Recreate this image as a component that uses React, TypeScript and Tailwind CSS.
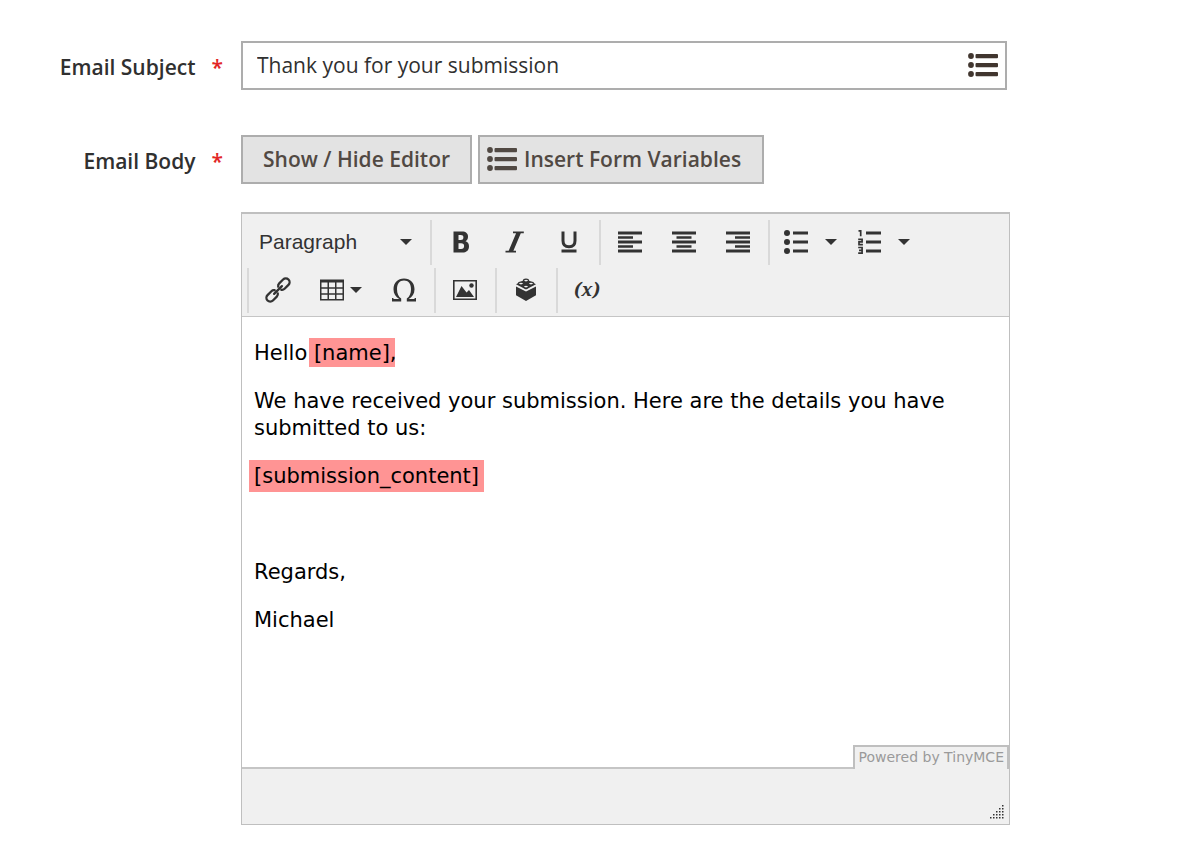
import type { ReactNode } from 'react';

function ListIcon() {
  return (
    <svg width="30" height="24" viewBox="0 0 30 24" fill="currentColor" className="shrink-0" aria-hidden="true">
      {[3, 12, 21].map((y) => (
        <g key={y}>
          <circle cx="3" cy={y} r="2.9" />
          <rect x="7.5" y={y - 2} width="22.5" height="4.2" rx="1" />
        </g>
      ))}
    </svg>
  );
}

function Icon({ children }: { children: ReactNode }) {
  return (
    <svg
      width="24"
      height="24"
      viewBox="0 0 24 24"
      fill="currentColor"
      className="shrink-0 overflow-visible"
      aria-hidden="true"
    >
      {children}
    </svg>
  );
}

function Caret() {
  return (
    <svg width="12" height="6" viewBox="0 0 12 6" fill="currentColor" className="shrink-0" aria-hidden="true">
      <path d="M0 0h12L6 6z" />
    </svg>
  );
}

function Group({ children, first = false }: { children: ReactNode; first?: boolean }) {
  return (
    <div
      className={`flex h-[45px] border-l-2 pr-[3px] pb-[2px] pl-[2px] ${first ? 'border-transparent' : 'border-[#d9d9d9]'}`}
    >
      {children}
    </div>
  );
}

function ToolButton({ label, children }: { label: string; children: ReactNode }) {
  return (
    <button type="button" aria-label={label} className="flex w-[54px] items-center justify-center">
      {children}
    </button>
  );
}

function AlignIcon({ x }: { x: number }) {
  return (
    <Icon>
      <path d="M0 1.5h24v3H0zM0 10.5h24v3H0zM0 19.5h24v3H0z" />
      <path d={`M${x} 6.2h15v2.6h-15zM${x} 15.2h15v2.6h-15z`} />
    </Icon>
  );
}

function Label({ htmlFor, children }: { htmlFor: string; children: ReactNode }) {
  return (
    <label htmlFor={htmlFor} className="flex h-[51px] items-center justify-end gap-4 pr-[18px] font-semibold">
      {children}
      <span className="text-[#e22626]">*</span>
    </label>
  );
}

export default function App() {
  return (
    <form className="grid grid-cols-[241px_1fr] pt-[41px] pr-[190px] font-['Open_Sans',sans-serif] text-[21px] leading-7 text-[#303030]">
      <Label htmlFor="subject">Email Subject</Label>
      <div className="mr-[3px] mb-[45px] flex h-[49px] items-center border-2 border-[#adadad] pr-[7px] pb-px pl-[14px]">
        <input
          id="subject"
          type="text"
          defaultValue="Thank you for your submission"
          className="min-w-0 flex-1 outline-none"
        />
        <button type="button" aria-label="Insert variable" className="text-[#41362f]">
          <ListIcon />
        </button>
      </div>

      <Label htmlFor="body">Email Body</Label>
      <div>
        <div className="mb-7 flex gap-[6px] font-semibold text-[#514943]">
          <button type="button" className="h-[49px] border-2 border-[#adadad] bg-[#e3e3e3] px-5 pb-[2px]">
            Show / Hide Editor
          </button>
          <button
            type="button"
            className="flex h-[49px] items-center gap-[7px] border-2 border-[#adadad] bg-[#e3e3e3] pr-[21px] pb-[2px] pl-[7px]"
          >
            <ListIcon />
            Insert Form Variables
          </button>
        </div>

        <div className="border border-t-2 border-[#bfbfbf]">
          <div className="flex flex-col gap-[3px] border-b border-[#c5c5c5] bg-[#f0f0f0] px-[5px] pt-[6px] pb-[3px] text-[#333]">
            <div className="flex">
              <Group first>
                <button
                  type="button"
                  className="flex w-[176px] items-center justify-between pr-[15px] pl-2 font-['Liberation_Sans',sans-serif] text-[21px]"
                >
                  Paragraph
                  <Caret />
                </button>
              </Group>
              <Group>
                <ToolButton label="Bold">
                  <Icon>
                    <path
                      fillRule="evenodd"
                      d="M4.5 1.5H13c4 0 6 2 6 5.200 0 2.200-.9 3.700-2.500 4.500 2.300.7 3.500 2.500 3.500 5 0 4-2.400 6.300-6.700 6.300H4.500zM9.500 5v4.900h2.300c1.700 0 2.600-.8 2.600-2.500S13.500 5 11.800 5zM9.500 13.200v5.800h2.600c2 0 3-.9 3-2.900s-1-2.900-3-2.900z"
                    />
                  </Icon>
                </ToolButton>
                <ToolButton label="Italic">
                  <Icon>
                    <path d="M10 1.500h10.800v1.800h-3L10.400 20.700H13v1.800H2.500v-1.800h3.200L13.100 3.300H10z" />
                  </Icon>
                </ToolButton>
                <ToolButton label="Underline">
                  <Icon>
                    <path d="M4.500 19.500h15v3h-15z" />
                    <path d="M6 1.500v9.200c0 4 2 6 6 6s6-2 6-6V1.500" fill="none" stroke="currentColor" strokeWidth="3" />
                  </Icon>
                </ToolButton>
              </Group>
              <Group>
                <ToolButton label="Align left">
                  <AlignIcon x={0} />
                </ToolButton>
                <ToolButton label="Align center">
                  <AlignIcon x={4.5} />
                </ToolButton>
                <ToolButton label="Align right">
                  <AlignIcon x={9} />
                </ToolButton>
              </Group>
              <Group>
                <button type="button" aria-label="Bullet list" className="flex w-[73px] items-center gap-[17px] pl-3">
                  <Icon>
                    <path d="M9 1.500h15v3H9zM9 10.500h15v3H9zM9 19.500h15v3H9z" />
                    <circle cx="3" cy="3" r="3" />
                    <circle cx="3" cy="12" r="3" />
                    <circle cx="3" cy="21" r="3" />
                  </Icon>
                  <Caret />
                </button>
                <button type="button" aria-label="Numbered list" className="flex w-[73px] items-center gap-[17px] pl-3">
                  <Icon>
                    <path d="M9 1.500h15v3H9zM9 10.500h15v3H9zM9 19.500h15v3H9z" />
                    <path
                      d="M1.500 .8h2.200V6.200M1.200 9.300h3.900v2.500H2v2.900h3.900M1.200 17.500h3.900v5.700H1.200M2 20.300h3"
                      fill="none"
                      stroke="currentColor"
                      strokeWidth="1.700"
                    />
                  </Icon>
                  <Caret />
                </button>
              </Group>
            </div>
            <div className="flex">
              <Group>
                <ToolButton label="Insert link">
                  <Icon>
                    <g
                      fill="none"
                      stroke="currentColor"
                      strokeWidth="2.300"
                      strokeLinecap="round"
                      transform="rotate(-45 12 12)"
                    >
                      <path d="M9.500 14.200a3.500 3.500 0 0 1-3 1.600H1a3.800 3.800 0 0 1 0-7.600h5.500a3.500 3.500 0 0 1 3 1.600" />
                      <path d="M14.500 9.800a3.500 3.500 0 0 1 3-1.600H23a3.800 3.800 0 0 1 0 7.600h-5.500a3.500 3.500 0 0 1-3-1.600" />
                      <path d="M6.500 12h11" />
                    </g>
                  </Icon>
                </ToolButton>
                <button type="button" aria-label="Table" className="flex w-[72px] items-center gap-[6px] pl-[15px]">
                  <Icon>
                    <path
                      fillRule="evenodd"
                      d="M0 1.500h24v21H0zM1.500 4.500v4.700h6V4.500zM9 4.500v4.700h6V4.500zM16.500 4.500v4.700h6V4.500zM1.500 10.700v4.500h6v-4.500zM9 10.700v4.500h6v-4.500zM16.500 10.700v4.500h6v-4.500zM1.500 16.700V21h6v-4.300zM9 16.700V21h6v-4.300zM16.500 16.700V21h6v-4.300z"
                    />
                  </Icon>
                  <Caret />
                </button>
                <ToolButton label="Special character">
                  <Icon>
                    <path d="M0 23.500v-3.500h1.200l.5 1h5.600c-3.600-2-5.800-5.300-5.800-9.800C1.500 4.800 5.700.5 12 .5s10.500 4.300 10.500 10.700c0 4.500-2.200 7.800-5.800 9.800h5.600l.5-1H24v3.500h-9.200v-3c2.700-1.700 4.200-4.800 4.200-9.200 0-5.300-2.500-8.700-7-8.700s-7 3.400-7 8.700c0 4.400 1.500 7.500 4.200 9.200v3z" />
                  </Icon>
                </ToolButton>
              </Group>
              <Group>
                <ToolButton label="Insert image">
                  <Icon>
                    <path fillRule="evenodd" d="M0 2h24v20H0zM1.600 3.600v16.800h20.800V3.600z" />
                    <path d="M3 19l5.500-11 5 6.500 2.500-2.500 5 7z" />
                    <circle cx="18.500" cy="7.500" r="2.200" />
                  </Icon>
                </ToolButton>
              </Group>
              <Group>
                <ToolButton label="Insert widget">
                  <Icon>
                    <path d="M2 8.500l10 5 10-5v8.800L12 23l-10-5.700z" />
                    <path d="M2 6.300L12 1l10 5.300-10 5.300z" />
                    <g fill="#f0f0f0" stroke="currentColor" strokeWidth="1.200">
                      <ellipse cx="12" cy="2.600" rx="2.500" ry="1.400" />
                      <ellipse cx="7" cy="5.600" rx="2.500" ry="1.400" />
                      <ellipse cx="17" cy="5.600" rx="2.500" ry="1.400" />
                      <ellipse cx="12" cy="8.600" rx="2.500" ry="1.400" />
                    </g>
                  </Icon>
                </ToolButton>
              </Group>
              <Group>
                <ToolButton label="Insert variable">
                  <span className="pb-[2px] font-['Noto_Serif','DejaVu_Serif',serif] text-lg font-bold italic">(x)</span>
                </ToolButton>
              </Group>
            </div>
          </div>

          <div className="relative">
            <div
              id="body"
              role="textbox"
              aria-label="Email Body"
              contentEditable
              suppressContentEditableWarning
              className="flex min-h-[450px] flex-col gap-[21px] px-3 pt-[23px] pb-8 font-['DejaVu_Sans',sans-serif] text-[21px] leading-[27px] text-black outline-none"
            >
              <p>
                Hello <span className="-mx-[5px] bg-[#ff9494] px-[5px] pt-[3px] pb-[2px]">[name]</span>,
              </p>
              <p>We have received your submission. Here are the details you have submitted to us:</p>
              <p>
                <span className="-mx-[5px] bg-[#ff9494] px-[5px] py-1">[submission_content]</span>
              </p>
              <p>&nbsp;</p>
              <p>Regards,</p>
              <p>Michael</p>
            </div>
            <a
              href="#tinymce"
              className="absolute right-0 -bottom-[2px] border-2 border-b-0 border-[#bfbfbf] bg-[#f0f0f0] pr-[3px] pb-[2px] pl-1 font-['DejaVu_Sans',sans-serif] text-[14px] leading-5 text-[#9a9a9a]"
            >
              Powered by TinyMCE
            </a>
          </div>

          <div className="flex h-[57px] items-end justify-end border-t-2 border-[#c5c5c5] bg-[#f0f0f0] p-1">
            <svg width="16" height="16" viewBox="0 0 16 16" fill="#333" aria-hidden="true">
              {[0, 1, 2, 3, 4].map((row) =>
                Array.from({ length: row + 1 }, (_, i) => (
                  <rect key={`${row}-${i}`} x={13 - i * 3} y={1 + row * 3} width="1.500" height="1.500" />
                )),
              )}
            </svg>
          </div>
        </div>
      </div>
    </form>
  );
}
